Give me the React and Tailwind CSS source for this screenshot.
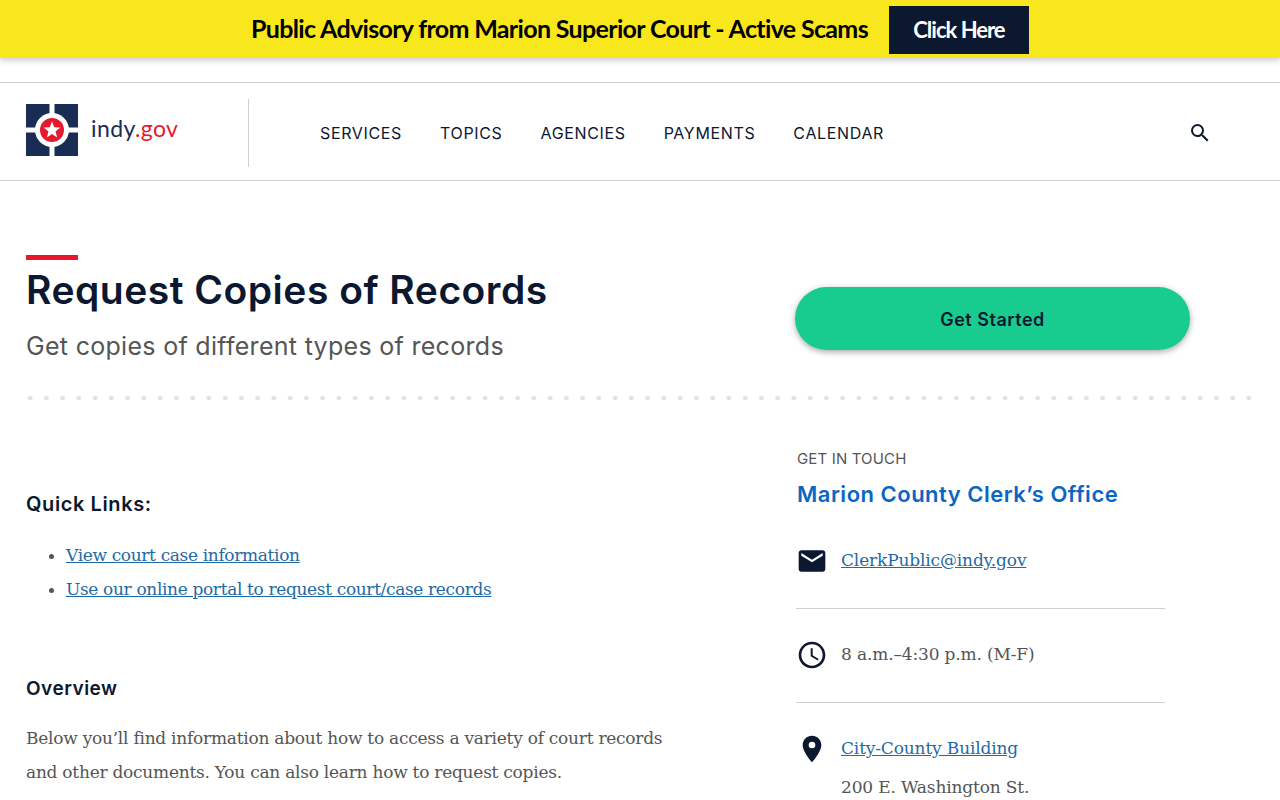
import React from "react";

const navlinks = ["SERVICES", "TOPICS", "AGENCIES", "PAYMENTS", "CALENDAR"];

function Logo() {
  return (
    <svg width="52" height="52" viewBox="0 0 52 52" className="shrink-0">
      <rect width="52" height="52" fill="#182c54" />
      <rect x="23.5" width="5" height="52" fill="#fff" />
      <rect y="23.5" width="52" height="5" fill="#fff" />
      <circle cx="26" cy="26" r="17" fill="#fff" />
      <circle cx="26" cy="26" r="12" fill="#e8192c" />
      <polygon
        points="26,17.5 28.2,23.3 34.4,23.6 29.5,27.5 31.2,33.5 26,30.1 20.8,33.5 22.5,27.5 17.6,23.6 23.8,23.3"
        fill="#fff"
      />
    </svg>
  );
}

function SearchIcon() {
  return (
    <svg width="24" height="24" viewBox="0 0 24 24" fill="#0c1730" className="ml-auto mr-[68px]">
      <path d="M15.5 14h-.79l-.28-.27A6.471 6.471 0 0 0 16 9.5 6.5 6.5 0 1 0 9.5 16c1.61 0 3.09-.59 4.23-1.57l.27.28v.79l5 4.99L20.49 19l-4.99-5zm-6 0C7.01 14 5 11.99 5 9.5S7.01 5 9.5 5 14 7.01 14 9.5 11.99 14 9.5 14z" />
    </svg>
  );
}

function MailIcon() {
  return (
    <svg width="32" height="32" viewBox="0 0 24 24" fill="#0c1730" className="shrink-0">
      <path d="M20 4H4c-1.1 0-1.99.9-1.99 2L2 18c0 1.1.9 2 2 2h16c1.1 0 2-.9 2-2V6c0-1.1-.9-2-2-2zm0 4l-8 5-8-5V6l8 5 8-5v2z" />
    </svg>
  );
}

function ClockIcon() {
  return (
    <svg width="32" height="32" viewBox="0 0 24 24" fill="#0c1730" className="shrink-0">
      <path d="M11.99 2C6.47 2 2 6.48 2 12s4.47 10 9.99 10C17.52 22 22 17.52 22 12S17.52 2 11.99 2zM12 20c-4.42 0-8-3.58-8-8s3.58-8 8-8 8 3.58 8 8-3.58 8-8 8zm.5-13H11v6l5.25 3.15.75-1.23-4.5-2.67z" />
    </svg>
  );
}

function PinIcon() {
  return (
    <svg width="32" height="32" viewBox="0 0 24 24" fill="#0c1730" className="shrink-0">
      <path d="M12 2C8.13 2 5 5.13 5 9c0 5.25 7 13 7 13s7-7.75 7-13c0-3.87-3.13-7-7-7zm0 9.5a2.5 2.5 0 0 1 0-5 2.5 2.5 0 0 1 0 5z" />
    </svg>
  );
}

export default function App() {
  return (
    <div className="h-[800px] overflow-hidden bg-white font-['Inter',sans-serif] text-[#0c1730]">
      <div className="flex h-[58px] items-center justify-center gap-[21px] bg-[#f9e71e] pt-px shadow-[0_2px_6px_rgba(60,60,90,0.3)]">
        <span className="pb-[2px] font-['Lato',sans-serif] text-[25px] font-bold tracking-[-0.66px] text-black">
          Public Advisory from Marion Superior Court - Active Scams
        </span>
        <a className="flex h-12 w-[140px] items-center justify-center bg-[#0c1730] font-['Lato',sans-serif] text-[22px] font-bold tracking-[-1px] text-white">
          Click Here
        </a>
      </div>

      <header className="mt-6 flex h-[99px] items-center border-y border-[#cfcfcf] pl-[26px] pt-[2px]">
        <div className="flex w-[222px] items-center gap-[13px] self-stretch pb-[6px]">
          <Logo />
          <span className="pb-[2px] font-['Lato',sans-serif] text-[23px] tracking-[0.4px] text-[#182c54]">
            indy<span className="text-[#e8192c]">.gov</span>
          </span>
        </div>
        <div className="h-[68px] w-px bg-[#cfcfcf]" />
        <nav className="ml-[71px] flex gap-[38px] pt-px text-[16px] tracking-[0.65px]">
          {navlinks.map((link) => (
            <a key={link}>{link}</a>
          ))}
        </nav>
        <SearchIcon />
      </header>

      <section className="px-[26px] pt-[74px]">
        <div className="flex">
          <div className="w-[769px]">
            <div className="h-[5px] w-[52px] bg-[#e8192c]" />
            <h1 className="mt-[7px] text-[39px] font-semibold leading-[46px] tracking-[0.5px]">
              Request Copies of Records
            </h1>
            <p className="mt-[17px] text-[25px] leading-8 tracking-[0.3px] text-[#555]">
              Get copies of different types of records
            </p>
          </div>
          <a className="mt-8 flex h-[63px] w-[395px] items-center justify-center rounded-full bg-[#18cc8f] pt-[2px] text-[18px] font-semibold tracking-[0.5px] shadow-[0_2px_6px_rgba(0,0,0,0.35)]">
            Get Started
          </a>
        </div>
        <div className="mt-[33px] h-[6px] bg-[radial-gradient(circle,#e2e2e2_2px,transparent_2.6px)] bg-[length:16.25px_6px] bg-[position:-4px_0]" />
      </section>

      <main className="flex px-[26px] pt-[46px]">
        <div className="w-[770px] pt-[43px]">
          <h2 className="text-[20px] font-semibold leading-7 tracking-[0.6px]">Quick Links:</h2>
          <ul className="mt-5 list-disc pl-10 font-['DejaVu_Serif',serif] text-[17px] leading-[34px] tracking-[-0.35px] text-[#1f6aa5]">
            <li className="marker:text-[#555]">
              <a className="underline">View court case information</a>
            </li>
            <li className="marker:text-[#555]">
              <a className="underline">Use our online portal to request court/case records</a>
            </li>
          </ul>
          <h2 className="mt-[69px] text-[19px] font-semibold leading-7 tracking-[0.5px]">Overview</h2>
          <p className="mt-[18px] w-[660px] font-['DejaVu_Serif',serif] text-[17px] leading-[34px] tracking-[-0.25px] text-[#555]">
            Below you’ll find information about how to access a variety of court records and other documents. You can also learn how to request copies.
          </p>
        </div>

        <aside className="w-[369px] font-['DejaVu_Serif',serif] text-[17px] tracking-[-0.15px]">
          <p className="pl-px font-['Inter',sans-serif] text-[15px] leading-6 tracking-[0.15px] text-[#555]">GET IN TOUCH</p>
          <h3 className="mt-[7px] pl-px font-['Inter',sans-serif] text-[22px] font-semibold leading-8 tracking-[0.5px] text-[#0a66c2]">
            Marion County Clerk’s Office
          </h3>
          <div className="mt-[35px] flex h-[64px] items-start gap-[13px] border-b border-[#cfcfcf]">
            <MailIcon />
            <a className="leading-[30px] text-[#1f6aa5] underline">ClerkPublic@indy.gov</a>
          </div>
          <div className="mt-[30px] flex h-[64px] items-start gap-[13px] border-b border-[#cfcfcf]">
            <ClockIcon />
            <span className="leading-[30px] text-[#555]">8 a.m.–4:30 p.m. (M-F)</span>
          </div>
          <div className="mt-[30px] flex items-start gap-[13px]">
            <PinIcon />
            <div className="leading-[30px]">
              <a className="text-[#1f6aa5] underline">City-County Building</a>
              <p className="mt-[9px] text-[#555]">200 E. Washington St.</p>
            </div>
          </div>
        </aside>
      </main>
    </div>
  );
}
